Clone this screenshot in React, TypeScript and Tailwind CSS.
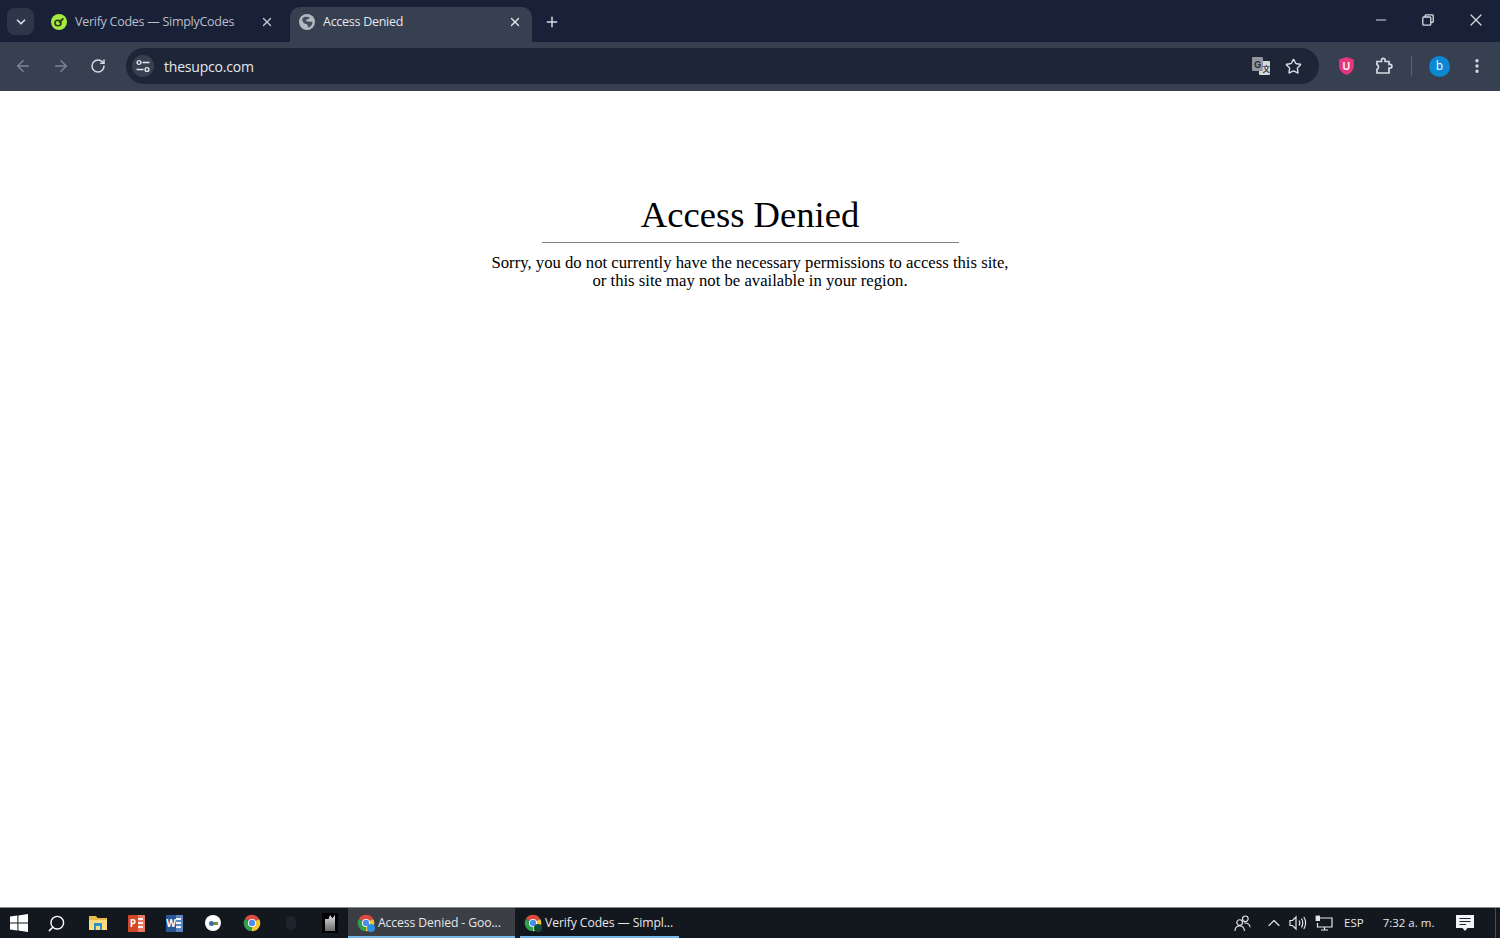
import {
  ArrowLeft,
  ArrowRight,
  ChevronDown,
  ChevronUp,
  EllipsisVertical,
  Minus,
  Plus,
  RotateCw,
  Search,
  Star,
  X,
} from "lucide-react";

const ui = "font-['Open_Sans','Noto_Sans',sans-serif]";
const win = "font-['Open_Sans','Noto_Sans',sans-serif]";

function ChromeIcon({ badge }: { badge?: string }) {
  return (
    <span className="relative block h-[18px] w-[18px]">
      <svg viewBox="0 0 24 24" className="h-[18px] w-[18px]">
        <path d="M2.47 6.5A11 11 0 0 1 21.53 6.5L12 12Z" fill="#dd4b3e" />
        <path d="M2.47 6.5A11 11 0 0 0 12 23L12 12Z" fill="#2f9e4f" />
        <path d="M21.53 6.5A11 11 0 0 1 12 23L12 12Z" fill="#f5c431" />
        <circle cx="12" cy="12" r="5.4" fill="#fff" />
        <circle cx="12" cy="12" r="4.2" fill="#4a8df0" />
      </svg>
      {badge ? (
        <span className={`absolute bottom-0 right-0 h-2 w-2 rounded-full ${badge}`} />
      ) : null}
    </span>
  );
}

function GlobeIcon() {
  return (
    <svg viewBox="0 0 16 16" className="h-4 w-4">
      <circle cx="8" cy="8" r="8" fill="#b4b8c0" />
      <path
        d="M3.2 4.4C5 2.2 8.4 2.4 11 3.4 9.8 5 7.6 5.2 6.6 6.6 7.6 8 11 7.4 13.4 8.2 13.6 10.6 11.6 13 8.8 13.6 9.6 11.8 8.4 10.4 6.4 9.8 4.6 9.2 3 7.4 3.2 4.4Z"
        fill="#454d5d"
      />
    </svg>
  );
}

function SimplyCodesIcon() {
  return (
    <svg viewBox="0 0 16 16" className="h-4 w-4">
      <circle cx="8" cy="8" r="8" fill="#a6e93f" />
      <ellipse cx="7" cy="9" rx="3.1" ry="2.7" fill="none" stroke="#2c3a1c" strokeWidth="1.6" />
      <path d="M8 8.6 12.4 4.4" stroke="#2c3a1c" strokeWidth="2" />
    </svg>
  );
}

function TuneIcon() {
  return (
    <svg viewBox="0 0 14 14" className="h-[14px] w-[14px]" fill="none" stroke="#e5e7eb" strokeWidth="1.4">
      <circle cx="3" cy="3.5" r="1.9" />
      <path d="M6.5 3.5H13.5M.5 10.5H7.5" />
      <circle cx="11" cy="10.5" r="1.9" />
    </svg>
  );
}

function PuzzleIcon() {
  return (
    <svg viewBox="0 0 18 18" className="h-[18px] w-[18px]" fill="none" stroke="#d7dbe3" strokeWidth="1.7">
      <path d="M2 4.5H6.5V3.2A1.8 1.8 0 0 1 10.1 3.2V4.5H14V7.4H15A1.9 1.9 0 0 1 15 11.2H14V16H2V12.2A2.5 2.5 0 0 0 2 7.6Z" />
    </svg>
  );
}

function TranslateIcon() {
  return (
    <svg viewBox="0 0 20 20" className="h-5 w-5">
      <rect x="8" y="5" width="11" height="14" rx="1" fill="#d4d7dc" />
      <rect x="1" y="1" width="11" height="14" rx="1" fill="#9095a0" />
      <text x="3" y="12" fontSize="9.5" fontWeight="700" fill="#2a3040" fontFamily="Inter, sans-serif">
        G
      </text>
      <text x="11.5" y="16" fontSize="7.5" fontWeight="700" fill="#3a4252" fontFamily="Noto Sans CJK SC, sans-serif">
        文
      </text>
    </svg>
  );
}

function ShieldIcon() {
  return (
    <svg viewBox="0 0 14 17" className="h-[18px] w-[15px]">
      <path d="M7 0 14 2.4V8.5C14 12.6 10.6 15.6 7 17 3.4 15.6 0 12.6 0 8.5V2.4Z" fill="#e5357c" />
      <text x="7" y="12" textAnchor="middle" fontSize="10" fontWeight="700" fill="#fde4ee" fontFamily="Inter, sans-serif">
        U
      </text>
    </svg>
  );
}

function WindowsLogo() {
  return (
    <svg viewBox="0 0 18 18" className="h-[18px] w-[18px]">
      <path d="M0 2.6 7.4 1.5V8.4H0ZM8.4 1.4 18 0V8.4H8.4ZM0 9.4H7.4V16.5L0 15.4ZM8.4 9.4H18V18L8.4 16.6Z" fill="#fff" />
    </svg>
  );
}

function FolderIcon() {
  return (
    <svg viewBox="0 0 18 16" className="h-4 w-[18px]">
      <path d="M0 1H7L8.5 3H18V15H0Z" fill="#e9b949" />
      <path d="M0 5H18V15H0Z" fill="#f9dc7d" />
      <path d="M5 8H13V15H11V11H7V15H5Z" fill="#2f8fc9" />
    </svg>
  );
}

function OfficeIcon({ letter, tile, page }: { letter: string; tile: string; page: string }) {
  return (
    <span className={`flex h-[17px] w-[17px] items-center justify-center overflow-hidden rounded-[1px] text-[10px] font-bold leading-none text-white ${tile} ${ui}`}>
      <span className="w-[10px] text-center">{letter}</span>
      <span className={`flex h-[17px] w-[7px] flex-col justify-center gap-[2px] ${page}`}>
        <span className="h-[2px] w-[5px] bg-white/90" />
        <span className="h-[2px] w-[5px] bg-white/90" />
        <span className="h-[2px] w-[5px] bg-white/90" />
      </span>
    </span>
  );
}

function PeopleIcon() {
  return (
    <svg viewBox="0 0 18 18" className="h-[17px] w-[17px]" fill="none" stroke="#e5e7eb" strokeWidth="1.2">
      <circle cx="12" cy="4" r="3" />
      <circle cx="6" cy="8" r="3" />
      <path d="M1 17C1 13.6 3 11.6 6 11.6S11 13.6 11 17M11 8.6C14 8.2 16.8 9.6 17 13" />
    </svg>
  );
}

function SpeakerIcon() {
  return (
    <svg viewBox="0 0 18 16" className="h-4 w-[18px]" fill="none" stroke="#e5e7eb" strokeWidth="1.2">
      <path d="M1 5.5H3.5L7 2V14L3.5 10.5H1Z" />
      <path d="M10 5.5C11 7 11 9 10 10.5M12.4 3.6C14.2 6 14.2 10 12.4 12.4M14.8 2C17.2 5.4 17.2 10.6 14.8 14" />
    </svg>
  );
}

function NetworkIcon() {
  return (
    <svg viewBox="0 0 18 16" className="h-4 w-[18px]" fill="none" stroke="#e5e7eb" strokeWidth="1.2">
      <path d="M5 3H17V12H2.5V8M9.5 12V15M6 15H13" />
      <rect x="0.6" y="0.6" width="4.4" height="5.4" fill="#e5e7eb" stroke="none" />
    </svg>
  );
}

function NotificationIcon() {
  return (
    <svg viewBox="0 0 18 18" className="h-[18px] w-[18px]">
      <path d="M0 1H18V14H11.5L9 17 6.5 14H0Z" fill="#f3f4f6" />
      <path d="M3.5 4.5H14.5M3.5 7.5H14.5M3.5 10.5H10" stroke="#1f2430" strokeWidth="1.2" />
    </svg>
  );
}

function RestoreIcon() {
  return (
    <svg viewBox="0 0 12 12" className="h-3 w-3" fill="none" stroke="#d7dbe3" strokeWidth="1.3">
      <rect x="0.8" y="3" width="8" height="8.2" rx="1" />
      <path d="M3.2 3V1.6A.8.8 0 0 1 4 .8H10.4A.8.8 0 0 1 11.2 1.6V7.6A.8.8 0 0 1 10.4 8.4H8.8" />
    </svg>
  );
}

export default function App() {
  return (
    <div className="flex h-[938px] w-[1500px] flex-col overflow-hidden bg-white">
      {/* window top: tabs */}
      <header className={`flex h-[42px] shrink-0 items-end bg-[#192138] text-[#d7dbe3] ${ui}`}>
        <button className="mb-[7px] ml-[7px] flex h-[27px] w-[27px] items-center justify-center rounded-lg bg-[#2e3649]">
          <ChevronDown size={14} strokeWidth={3} />
        </button>
        <div className="mb-[10px] ml-[17px] flex h-5 w-[223px] items-center">
          <SimplyCodesIcon />
          <span className="ml-2 text-[12.5px] tracking-[-0.27px] text-[#b9bec9]">Verify Codes — SimplyCodes</span>
          <X size={14} strokeWidth={2.4} className="ml-auto text-[#c3c8d1]" />
        </div>
        <div className="ml-4 flex h-[35px] w-[242px] items-center rounded-t-[10px] bg-[#374051] pb-[5px] pl-[9px] pr-[10px]">
          <GlobeIcon />
          <span className="ml-2 text-[12.5px] tracking-[-0.27px] text-[#e3e6ec]">Access Denied</span>
          <X size={14} strokeWidth={2.4} className="ml-auto text-[#e3e6ec]" />
        </div>
        <Plus size={16} strokeWidth={2.2} className="mb-3 ml-3 text-[#d7dbe3]" />
        <div className="mb-3 ml-auto flex items-center">
          <Minus size={16} strokeWidth={1.6} className="mr-[33px]" />
          <RestoreIcon />
          <X size={20} strokeWidth={1.5} className="ml-[32px] mr-[14px]" />
        </div>
      </header>

      {/* toolbar */}
      <div className={`flex h-[49px] shrink-0 items-center bg-[#374051] pb-[1px] text-[#d7dbe3] ${ui}`}>
        <ArrowLeft size={18} className="ml-[14px] text-[#7d8594]" />
        <ArrowRight size={18} className="ml-[20px] text-[#7d8594]" />
        <RotateCw size={16} strokeWidth={2.2} className="ml-[20px]" />
        <div className="ml-[20px] flex h-9 w-[1193px] items-center rounded-full bg-[#1e2536] pl-[6px] pr-[17px]">
          <span className="flex h-[22px] w-[22px] items-center justify-center rounded-full bg-[#374051]">
            <TuneIcon />
          </span>
          <span className="ml-[10px] text-[14px] tracking-[-0.2px] text-[#e5e7eb]">thesupco.com</span>
          <span className="ml-auto flex items-center gap-[14px]">
            <TranslateIcon />
            <Star size={17} strokeWidth={2} />
          </span>
        </div>
        <span className="ml-[20px]">
          <ShieldIcon />
        </span>
        <span className="ml-[21px]">
          <PuzzleIcon />
        </span>
        <span className="ml-[18px] h-5 w-px bg-[#5a6272]" />
        <span className="ml-[17px] flex h-[21px] w-[21px] items-center justify-center rounded-full bg-[#0b87d4] text-[12px] text-white">
          b
        </span>
        <EllipsisVertical size={18} strokeWidth={2.4} className="ml-[18px]" />
      </div>

      {/* page */}
      <main className="flex min-h-0 flex-1 flex-col items-center pt-[102px] font-['Liberation_Serif',serif] text-black">
        <h1 className="h-[44px] text-[36.6px] leading-[44px]">Access Denied</h1>
        <hr className="mt-[5px] w-[417px] border-t border-[#808080]" />
        <p className="mt-[11px] text-center text-[16.7px] leading-[18.4px]">
          Sorry, you do not currently have the necessary permissions to access this site,
          <br />
          or this site may not be available in your region.
        </p>
      </main>

      {/* taskbar */}
      <footer className={`flex h-[31px] shrink-0 items-center border-t border-[#8a8d92] bg-[#13171e] text-[#e5e7eb] ${win}`}>
        <span className="ml-[10px]">
          <WindowsLogo />
        </span>
        <Search size={19} strokeWidth={1.8} className="ml-[19px] -scale-x-100 text-white" />
        <span className="ml-[23px]">
          <FolderIcon />
        </span>
        <span className="ml-[21px]">
          <OfficeIcon letter="P" tile="bg-[#d24726]" page="bg-[#e8795c]" />
        </span>
        <span className="ml-[21px]">
          <OfficeIcon letter="W" tile="bg-[#2b5797]" page="bg-[#5d86c0]" />
        </span>
        <span className="ml-[22px] flex h-[16px] w-[16px] items-center justify-center rounded-full bg-white">
          <span className="h-[5px] w-[5px] rounded-full bg-[#3a6ea5]" />
          <span className="h-[3px] w-[4px] bg-[#7a8a4a]" />
        </span>
        <span className="ml-[22px]">
          <ChromeIcon />
        </span>
        <span className="ml-[25px] h-[14px] w-[10px] rounded-full bg-[#1f242c]" />
        <span className="ml-[26px] flex h-[20px] w-[16px] items-center justify-center bg-black">
          <span className="h-[16px] w-[10px] bg-gradient-to-b from-[#e0e0e0] to-[#6b6b6b] [clip-path:polygon(0_25%,35%_25%,50%_0,75%_20%,100%_0,100%_100%,0_100%)]" />
        </span>
        <div className="ml-[10px] flex h-full w-[167px] items-center border-b-2 border-[#76b9ed] bg-[#3b3e44] pl-[9px] pt-[2px]">
          <ChromeIcon badge="bg-[#2f8fe0]" />
          <span className="ml-[3px] text-[12.2px] tracking-[-0.1px]">Access Denied - Goo...</span>
        </div>
        <div className="ml-[5px] flex h-full w-[159px] items-center border-b-2 border-[#76b9ed] pl-[4px] pt-[2px]">
          <ChromeIcon badge="bg-[#0f4f3a]" />
          <span className="ml-[3px] text-[12.2px] tracking-[-0.1px]">Verify Codes — Simpl...</span>
        </div>
        <span className="ml-[555px]">
          <PeopleIcon />
        </span>
        <ChevronUp size={20} strokeWidth={1.4} className="ml-[13px]" />
        <span className="ml-[5px]">
          <SpeakerIcon />
        </span>
        <span className="ml-[8px]">
          <NetworkIcon />
        </span>
        <span className="ml-[11px] text-[11.5px]">ESP</span>
        <span className="ml-[19px] text-[11.5px]">7:32 a. m.</span>
        <span className="ml-[22px]">
          <NotificationIcon />
        </span>
        <span className="ml-[21px] h-full w-px bg-[#4a4d52]" />
      </footer>
    </div>
  );
}
